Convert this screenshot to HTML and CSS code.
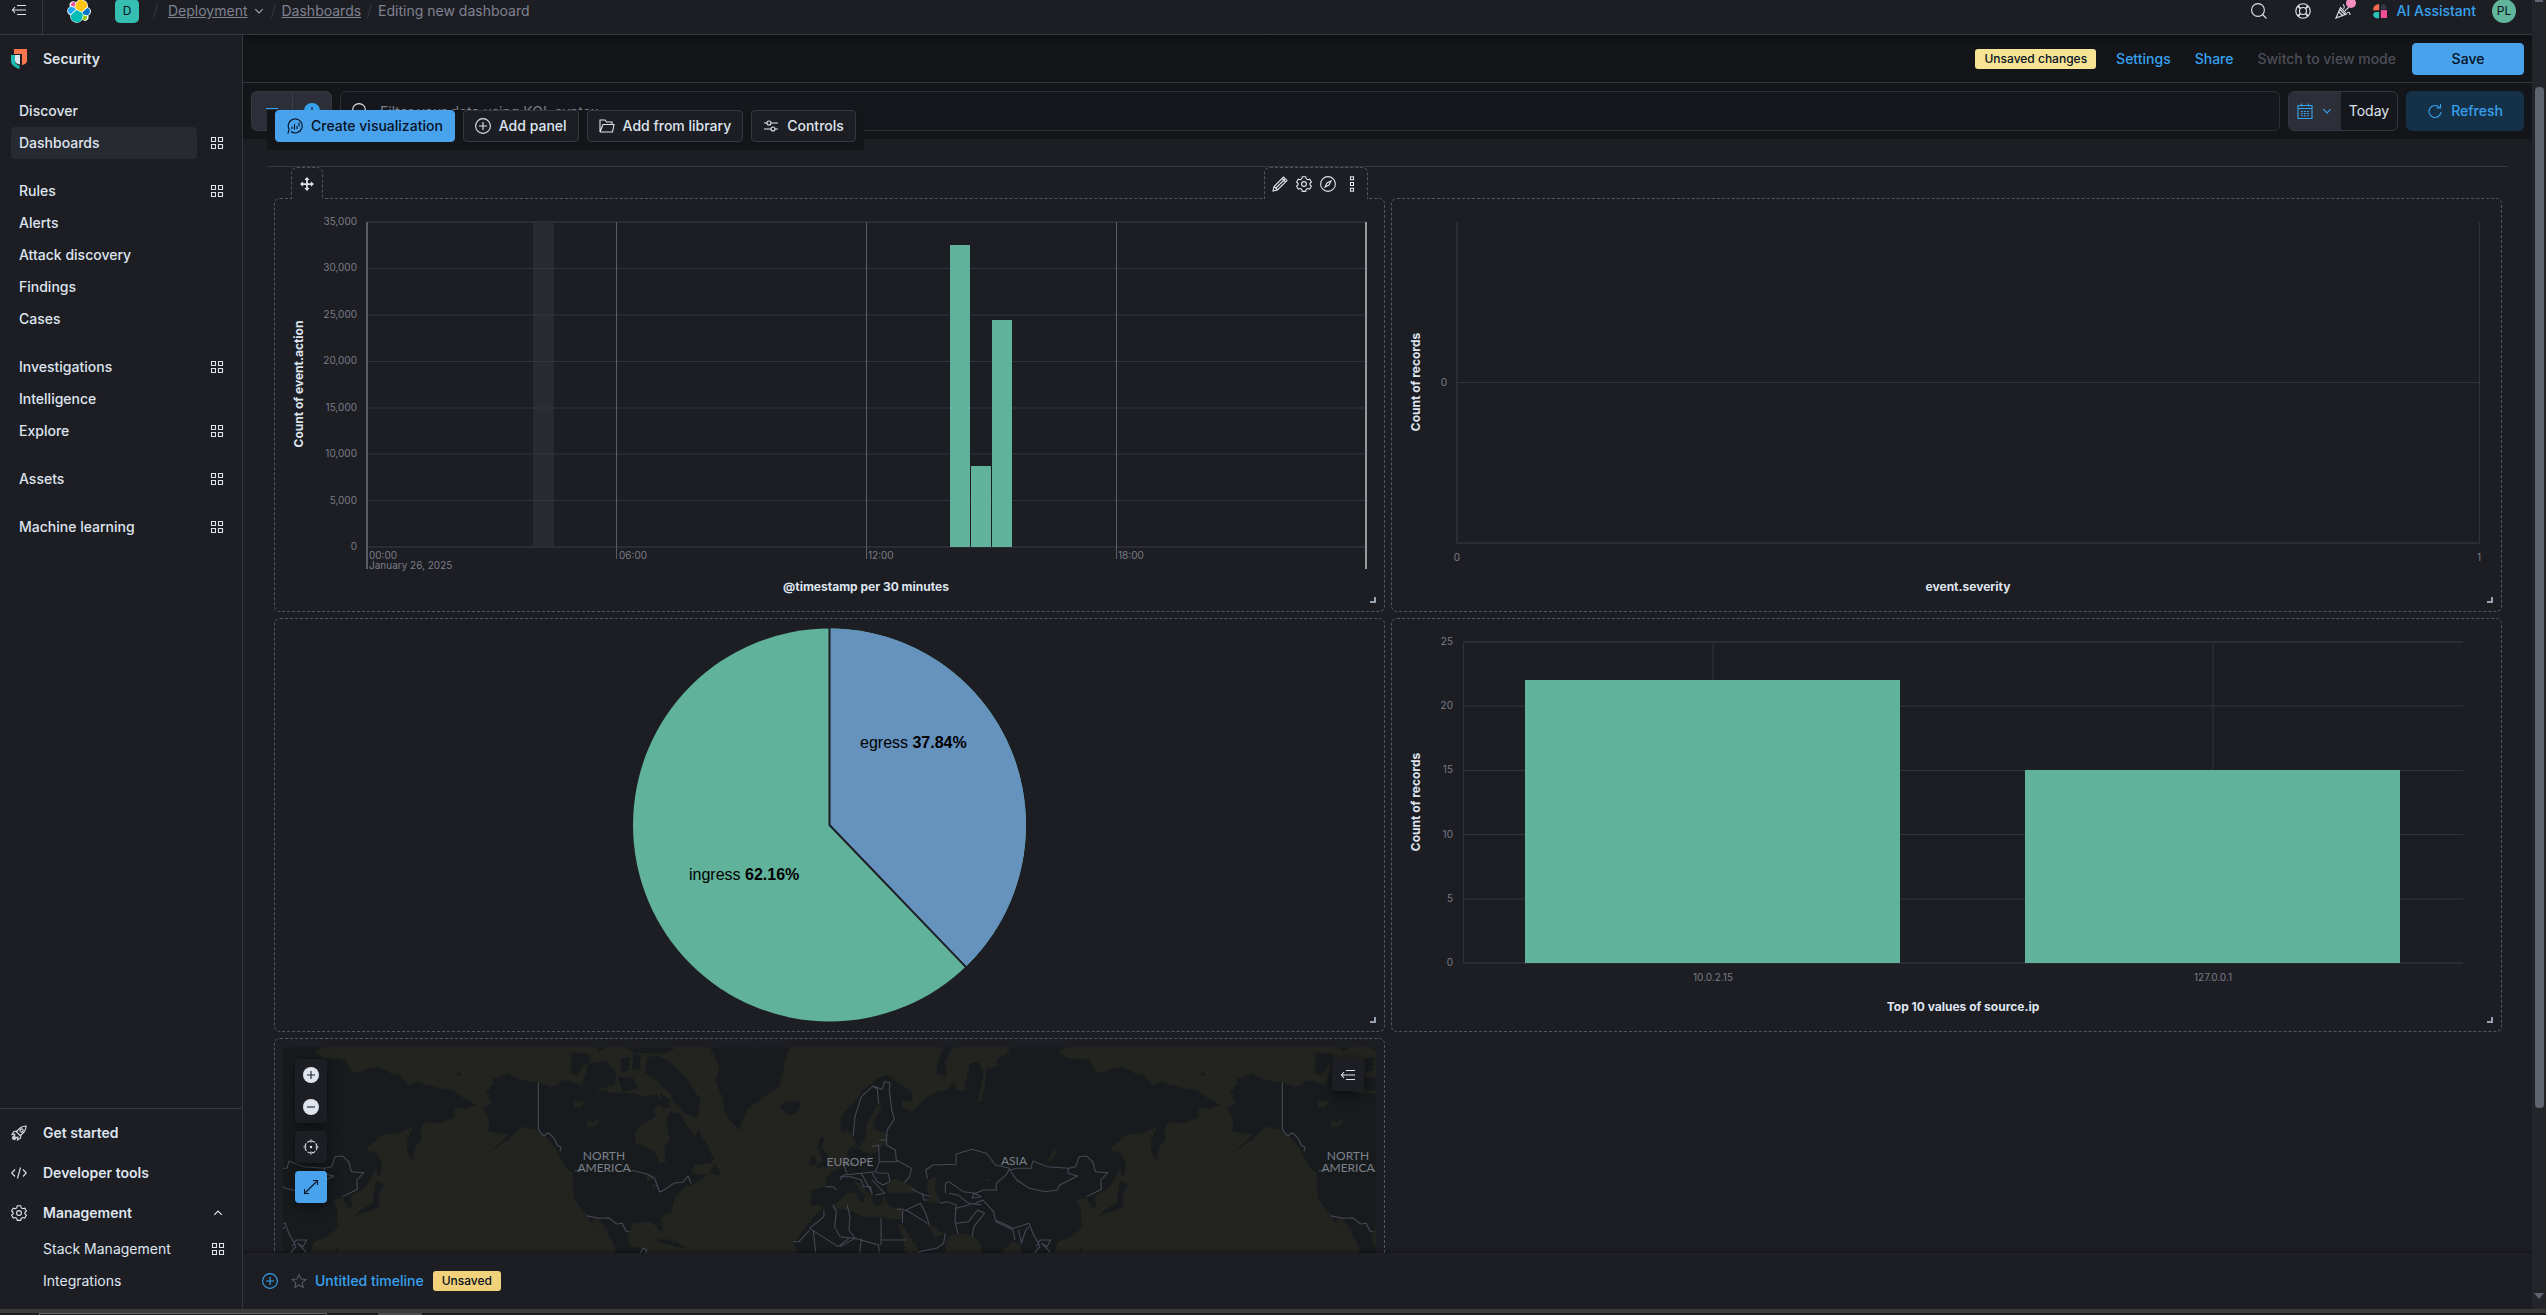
FILE: index.html
```html
<!DOCTYPE html>
<html lang="en">
<head>
<meta charset="utf-8">
<title>Editing new dashboard - Elastic</title>
<link rel="stylesheet" href="styles.css">
</head>
<body>
<svg class="defs" aria-hidden="true">
  <symbol id="i-menu" viewBox="0 0 16 16"><path d="M6 3.500h9M1.500 8H15M6 12.500h9M4 5L1.500 8 4 11"/></symbol>
  <symbol id="i-apps" viewBox="0 0 16 16"><path d="M2.500 2.500h4v4h-4zM9.500 2.500h4v4h-4zM2.500 9.500h4v4h-4zM9.500 9.500h4v4h-4z"/></symbol>
  <symbol id="i-down" viewBox="0 0 16 16"><path d="M3 5.500l5 5 5-5"/></symbol>
  <symbol id="i-up" viewBox="0 0 16 16"><path d="M3 10.500l5-5 5 5"/></symbol>
  <symbol id="i-search" viewBox="0 0 16 16"><circle cx="7" cy="7" r="6.400"/><path d="M11.500 11.500L15.500 15.500"/></symbol>
  <symbol id="i-plus" viewBox="0 0 16 16"><circle cx="8" cy="8" r="7.400"/><path d="M8 4v8M4 8h8"/></symbol>
  <symbol id="i-gear" viewBox="0 0 16 16"><circle cx="8" cy="8" r="2.400"/><path d="M6.300.8h3.400l.6 2.100 1.300.8 2.100-.6 1.700 2.900-1.500 1.500v1.200l1.500 1.500-1.700 2.900-2.100-.6-1.300.8-.6 2.100H6.300l-.6-2.100-1.300-.8-2.100.6L.6 10.200l1.500-1.500V7.500L.6 6l1.700-2.900 2.100.6 1.300-.8z"/></symbol>
</svg>

<div class="app">
  <header class="top">
    <button class="icon-btn top-menu" aria-label="Toggle navigation"><svg class="ic"><use href="#i-menu"/></svg></button>
    <a class="logo" href="#" aria-label="Elastic home"><svg viewBox="0 0 32 32"><path fill="#fff" d="M32 16.800c0-2.700-1.700-5-4.200-5.900a9 9 0 00-16.200-6.400A4.800 4.800 0 003.900 10 6.300 6.300 0 00.2 15.500c0 2.700 1.700 5.100 4.200 6a9 9 0 0016.200 6.300 4.800 4.800 0 007.700-5.400A6.300 6.300 0 0032 16.800"/><path fill="#FEC514" d="M12.600 13.800l7 3.200 7.100-6.200A7.900 7.900 0 0012.200 5.200L11 11.300z"/><path fill="#02BCB7" d="M5.400 21.300a7.900 7.900 0 0014.600 5.600l1.200-6-1.600-3-7-3.200z"/><path fill="#F04E98" d="M5.400 9.100l4.800 1.100 1-5.400a3.800 3.800 0 00-5.800 4.300"/><path fill="#1BA9F5" d="M5 10.200a5.300 5.300 0 00-.2 10l6.700-6.100-1.200-2.600z"/><path fill="#93C90E" d="M20.900 27.200a3.800 3.800 0 005.900-4.300L22 21.800z"/><path fill="#07C" d="M21.900 20.500l5.300 1.200a5.300 5.300 0 00.2-9.900l-6.900 6z"/></svg></a>
    <span class="space">D</span>
    <nav class="crumbs" aria-label="Breadcrumbs">
      <i class="slash"></i><a href="#">Deployment</a><svg class="ic ic-12"><use href="#i-down"/></svg>
      <i class="slash"></i><a href="#">Dashboards</a>
      <i class="slash"></i><span>Editing new dashboard</span>
    </nav>
    <div class="top-right">
      <button class="icon-btn" aria-label="Search"><svg class="ic"><use href="#i-search"/></svg></button>
      <button class="icon-btn" aria-label="Help"><svg class="ic" viewBox="0 0 16 16"><circle cx="8" cy="8" r="7.200"/><circle cx="8" cy="8" r="3.500"/><path d="M2.500 3.500l3 2M3.500 2.500l2 3M13.500 3.500l-3 2M12.500 2.500l-2 3M2.500 12.500l3-2M3.500 13.500l2-3M13.500 12.500l-3-2M12.500 13.500l-2-3"/></svg></button>
      <button class="icon-btn news" aria-label="News"><svg class="ic" viewBox="0 0 16 16"><path d="M1 15L5.500 4.500 11.500 11zM4 9l4 4M5 6.500l5 5M8 1.500c1.500 1 1.500 3 .5 4.500M10 8c1-2 3-2 3.500-4M12 9.500c2-.8 3 .5 3 2.500"/></svg><i class="dot"></i></button>
      <a class="assistant" href="#"><svg viewBox="0 0 16 16"><path fill="#F86B4F" d="M7 0v7H0a7 7 0 017-7"/><circle cx="12" cy="3.500" r="3.300" fill="#343741"/><path fill="#2CBFB3" d="M7 9v7a5 5 0 01-7-4 4 4 0 014-3z"/><path fill="#F04E98" d="M9 7h7v9H9z"/></svg>AI Assistant</a>
      <span class="avatar">PL</span>
    </div>
  </header>

  <aside class="side">
    <div class="solution"><svg viewBox="0 0 16 20"><path fill="#FA744E" d="M3 0h13v12c0 2-2 3.500-5 4V5H3z"/><path fill="#1DBAB0" d="M0 6h4v6.500c0 2 2 3.500 4.500 4V20C3 18 0 15.500 0 12z"/><path fill="#dfe5ef" d="M4 6h5v9.500C6 15 4 13.500 4 12z"/></svg>Security</div>
    <nav class="menu" aria-label="Security">
      <div class="group">
        <div class="row"><a href="#">Discover</a></div>
        <div class="row"><a class="active" href="#">Dashboards</a><svg class="ic"><use href="#i-apps"/></svg></div>
      </div>
      <div class="group">
        <div class="row"><a href="#">Rules</a><svg class="ic"><use href="#i-apps"/></svg></div>
        <div class="row"><a href="#">Alerts</a></div>
        <div class="row"><a href="#">Attack discovery</a></div>
        <div class="row"><a href="#">Findings</a></div>
        <div class="row"><a href="#">Cases</a></div>
      </div>
      <div class="group">
        <div class="row"><a href="#">Investigations</a><svg class="ic"><use href="#i-apps"/></svg></div>
        <div class="row"><a href="#">Intelligence</a></div>
        <div class="row"><a href="#">Explore</a><svg class="ic"><use href="#i-apps"/></svg></div>
      </div>
      <div class="group"><div class="row"><a href="#">Assets</a><svg class="ic"><use href="#i-apps"/></svg></div></div>
      <div class="group"><div class="row"><a href="#">Machine learning</a><svg class="ic"><use href="#i-apps"/></svg></div></div>
    </nav>
    <nav class="side-foot" aria-label="Management">
      <a class="main-link" href="#"><svg class="ic" viewBox="0 0 16 16"><path d="M15 1c-4 0-7 2-9.500 6l3.500 3.500C13 8 15 5 15 1zM6 6L3 6.500 1 9.500l3.500-.5M10 10l-.5 3-3 2 .5-3.500M4 10l-3 3M6 12l-3 3M4.500 11.500L1.500 14.500"/><circle cx="10.500" cy="5.500" r="1.600"/></svg>Get started</a>
      <a class="main-link" href="#"><svg class="ic" viewBox="0 0 16 16"><path d="M4 4.500L.7 8 4 11.500M12 4.500L15.300 8 12 11.500M9.500 2.500l-3 11"/></svg>Developer tools</a>
      <a class="main-link" href="#"><svg class="ic"><use href="#i-gear"/></svg>Management<svg class="ic ic-12 end"><use href="#i-up"/></svg></a>
      <a class="sub-link" href="#">Stack Management<svg class="ic end"><use href="#i-apps"/></svg></a>
      <a class="sub-link" href="#">Integrations</a>
    </nav>
  </aside>

  <main class="main">
    <div class="actions">
      <span class="badge">Unsaved changes</span>
      <button class="text-btn">Settings</button>
      <button class="text-btn">Share</button>
      <button class="text-btn" disabled>Switch to view mode</button>
      <button class="btn primary save">Save</button>
    </div>
    <div class="query">
      <div class="filters">
        <button aria-label="Saved queries"><svg class="ic" viewBox="0 0 16 16"><path d="M2 5.500h12M4.500 9h7M6.500 12.500h3"/></svg></button>
        <button aria-label="Add filter"><svg class="ic solid" viewBox="0 0 16 16"><circle cx="8" cy="8" r="8"/><path d="M8 4v8M4 8h8"/></svg></button>
      </div>
      <label class="kql"><svg class="ic"><use href="#i-search"/></svg><input type="text" aria-label="Query" placeholder="Filter your data using KQL syntax"></label>
      <div class="dates">
        <button class="cal" aria-label="Date quick select"><svg class="ic" viewBox="0 0 16 16"><path d="M1 2.500h14v13H1zM1 5.500h14M4.500.5v3M11.500.5v3M4 8.500h2M7 8.500h2M10 8.500h2M4 10.500h2M7 10.500h2M10 10.500h2M4 12.800h2M7 12.800h2M10 12.800h2"/></svg><svg class="ic ic-12"><use href="#i-down"/></svg></button>
        <button class="today">Today</button>
      </div>
      <button class="refresh"><svg class="ic" viewBox="0 0 16 16"><path d="M12.500 4.500A6 6 0 1014 9M13.500 1v4h-4"/></svg>Refresh</button>
    </div>

    <div class="dash">
      <div class="tools">
        <button class="btn primary"><svg class="ic" viewBox="0 0 16 16"><path d="M4 13.500a7 7 0 10-1.800-2L.8 15.500M5 8.500v2.500M7.500 6v5.500M10 8v3M12 4.500v4"/></svg>Create visualization</button>
        <button class="btn"><svg class="ic"><use href="#i-plus"/></svg>Add panel</button>
        <button class="btn"><svg class="ic" viewBox="0 0 16 16"><path d="M1 14V2h5l1.500 2H13v2.500M1 14h12.500L15 6.500H4L1 14"/></svg>Add from library</button>
        <button class="btn"><svg class="ic" viewBox="0 0 16 16"><path d="M1 5h3M8 5h7M1 11h7M12 11h3"/><circle cx="6" cy="5" r="2"/><circle cx="10" cy="11" r="2"/></svg>Controls</button>
      </div>
      <hr>
      <div class="grid">
        <section class="panel">
          <button class="tab drag" aria-label="Move panel"><svg class="ic bold" viewBox="0 0 16 16"><path d="M8 2v12M2 8h12"/><path class="fill" d="M8 0l3 3.500H5zM8 16l3-3.500H5zM0 8l3.500-3v6zM16 8l-3.500-3v6z"/></svg></button>
          <div class="tab hover">
            <button class="icon-btn" aria-label="Edit"><svg class="ic" viewBox="0 0 16 16"><path d="M1 15l1-4.500L11.500 1 15 4.500 5.500 14zM2 10.500L5.500 14M4 12l9-9M10 2.500L13.500 6"/></svg></button>
            <button class="icon-btn" aria-label="Panel settings"><svg class="ic"><use href="#i-gear"/></svg></button>
            <button class="icon-btn" aria-label="Explore"><svg class="ic" viewBox="0 0 16 16"><circle cx="8" cy="8" r="7.400"/><path d="M11 5L9 9 5 11l2-4z"/></svg></button>
            <button class="icon-btn" aria-label="More"><svg class="ic" viewBox="0 0 16 16"><path d="M6.500.8h3v3h-3zM6.500 6.500h3v3h-3zM6.500 12.200h3v3h-3z"/></svg></button>
          </div>
          <svg class="chart" viewBox="275 199 1109 412" role="img" aria-label="Count of event.action over time">
            <rect class="hl" x="533" y="222" width="21" height="325"/>
            <path class="grid-l" d="M367 268.500h999M367 315h999M367 361.500h999M367 408h999M367 454h999M367 500.500h999"/>
            <path class="grid-b" d="M367 222h999M367 547h999"/>
            <path class="time-l" d="M616.500 222v337M866.500 222v337M1116.500 222v337"/>
            <path class="time-b" d="M367 222v347"/><path class="time-e" d="M1366 222v347"/>
            <path class="green" d="M950 245h20v302h-20zM971 466h20v81h-20zM992 320h20v227h-20z"/>
            <g class="lab r"><text x="357" y="225">35,000</text><text x="357" y="271">30,000</text><text x="357" y="318">25,000</text><text x="357" y="364">20,000</text><text x="357" y="411">15,000</text><text x="357" y="457">10,000</text><text x="357" y="504">5,000</text><text x="357" y="550">0</text></g>
            <g class="lab"><text x="369" y="559">00:00</text><text x="369" y="569">January 26, 2025</text><text x="619" y="559">06:00</text><text x="868" y="559">12:00</text><text x="1118" y="559">18:00</text></g>
            <text class="title" x="866" y="591">@timestamp per 30 minutes</text>
            <text class="title" transform="translate(303 384) rotate(-90)">Count of event.action</text>
          </svg>
          <i class="grip"></i>
        </section>

        <section class="panel">
          <svg class="chart" viewBox="1392 199 1109 412" role="img" aria-label="Count of records by event.severity">
            <path class="grid-b" d="M1457 222v321M1457 543h1023"/><path class="grid-l" d="M1457 382.500h1022M2479.500 222v321"/>
            <g class="lab r"><text x="1447" y="386">0</text></g>
            <g class="lab c"><text x="1457" y="561">0</text><text x="2479" y="561">1</text></g>
            <text class="title" x="1968" y="591">event.severity</text>
            <text class="title" transform="translate(1420 382) rotate(-90)">Count of records</text>
          </svg>
          <i class="grip"></i>
        </section>

        <section class="panel">
          <svg class="chart" viewBox="275 619 1109 412" role="img" aria-label="Ingress and egress share">
            <circle class="green" cx="829.500" cy="825" r="196.500"/>
            <path class="slice" d="M829.500 825V628.500A196.500 196.500 0 01965.600 966.700Z"/>
            <path class="cut" d="M829.500 628V825L966 967.100"/>
            <text class="pie" x="860" y="748">egress <tspan>37.84%</tspan></text>
            <text class="pie" x="689" y="880">ingress <tspan>62.16%</tspan></text>
          </svg>
          <i class="grip"></i>
        </section>

        <section class="panel">
          <svg class="chart" viewBox="1392 619 1109 412" role="img" aria-label="Top 10 values of source.ip">
            <path class="grid-l" d="M1463 706h1000M1463 770.500h1000M1463 834.500h1000M1463 899h1000M1463.500 642v321M1713 642v321M2213 642v321"/>
            <path class="grid-b" d="M1463 642h1000M1463 963h1000"/>
            <path class="green" d="M1525 680h375v283h-375zM2025 770h375v193h-375z"/>
            <g class="lab r"><text x="1453" y="645">25</text><text x="1453" y="709">20</text><text x="1453" y="773">15</text><text x="1453" y="838">10</text><text x="1453" y="902">5</text><text x="1453" y="966">0</text></g>
            <g class="lab c"><text x="1713" y="981">10.0.2.15</text><text x="2213" y="981">127.0.0.1</text></g>
            <text class="title" x="1963" y="1011">Top 10 values of source.ip</text>
            <text class="title" transform="translate(1420 802) rotate(-90)">Count of records</text>
          </svg>
          <i class="grip"></i>
        </section>

        <section class="panel map">
          <svg class="world" viewBox="283 1047 1093 396" preserveAspectRatio="xMinYMin slice" role="img" aria-label="World map">
            <defs>
              <filter id="coast" x="-5%" y="-5%" width="110%" height="110%" color-interpolation-filters="sRGB"><feTurbulence type="fractalNoise" baseFrequency=".14" numOctaves="3" seed="4"/><feDisplacementMap in="SourceGraphic" scale="9" xChannelSelector="R" yChannelSelector="G"/></filter>
              <g id="america" transform="translate(270 1030) scale(.3827 .3333)">
                <g filter="url(#coast)">
                <path class="land" d="M580 150L620 132 660 150 700 158 740 172 770 150 810 165 860 180 900 190 950 190 980 200 1010 190 1020 220 1000 240 1010 260 975 280 952 310 955 340 990 355 1010 370 1018 400 1035 395 1030 350 1045 330 1035 280 1045 245 1075 255 1085 280 1110 320 1120 300 1140 340 1160 385 1150 400 1110 405 1100 430 1145 435 1110 460 1085 470 1060 500 1050 540 1020 565 1028 605 1015 600 1000 575 950 580 935 610 940 650 970 655 985 670 1000 900 950 900 900 650 880 600 860 565 840 560 850 600 868 625 850 600 830 555 795 510 790 430 770 410 755 370 730 330 700 300 660 290 640 310 620 330 575 365 600 340 625 315 570 305 575 270 555 235 580 220 565 185 585 160Z"/>
                <path class="land" d="M790 68L830 70 840 90 815 110 805 135 785 130ZM830 100L880 95 905 130 900 165 850 180 815 165 825 130ZM915 85L940 80 940 120 920 125ZM950 70L970 75 965 120 945 115ZM985 85L1010 75 1050 100 1085 140 1125 210 1115 265 1085 250 1060 225 1045 190 1010 150 980 130ZM910 140L950 145 960 175 920 185ZM1020 190L1045 210 1040 235 1020 230ZM1150 50L1175 110 1165 150 1180 200 1190 250 1225 302 1245 240 1290 200 1330 170 1345 100 1355 50ZM1330 228L1350 215 1385 215 1385 240 1355 255ZM850 50L880 50 860 65ZM930 55L1000 50 1060 55 1030 70 950 68ZM1145 430L1165 400 1178 435ZM1000 630L1040 628 1095 655 1060 650Z"/>
                <path class="sea" d="M790 215L825 210 815 230 795 232ZM830 275L870 265 850 290 825 290ZM985 430L1010 440 1000 450 985 455ZM1000 460L1010 465 1000 482Z"/>
                </g>
                <path class="edge" d="M701 158V298L715 318 728 308 745 330 750 345 760 352 758 364M797 422H815M935 422H950L985 432 1005 445 1018 486 1030 480 1055 460 1080 456 1092 438 1100 460M828 557L860 565 885 563 905 582 920 580 930 603 938 605M968 668L975 655 985 660 980 670"/>
              </g>
              <g id="eurasia" transform="translate(840 1030) scale(.3571 .3333)">
                <g filter="url(#coast)">
                <path class="land" d="M1 310L1 265 20 240 40 215 65 180 90 160 110 140 135 135 150 150 180 170 205 190 200 215 170 210 178 235 200 245 215 230 240 205 270 185 300 180 320 160 330 185 350 180 358 130 365 100 390 95 395 120 440 110 440 85 470 70 475 45 640 45 610 68 640 85 700 90 718 130 750 120 790 110 825 130 850 135 875 165 900 155 960 175 1000 180 1030 205 1065 225 1040 235 1005 235 1000 265 960 280 920 275 905 310 912 330 895 345 885 395 870 360 875 320 890 288 850 310 800 315 755 360 790 370 785 420 760 460 745 480 712 500 718 535 705 530 690 500 665 510 675 545 678 590 650 620 610 635 600 668 600 900 530 900 505 640 480 635 450 668 440 900 400 900 395 640 370 615 330 610 300 620 270 900 -60 900 -128 640 -96 590 -74 560 -42 535 -60 525 -83 525 -80 480 -42 470 -37 440 -10 420 22 400 22 360 32 350 45 350 40 325 20 300Z"/>
                <path class="land" d="M320 50L295 90 300 140 270 130 275 90 290 50ZM-55 320L-45 325 -50 350 -31 385 -37 410 -68 415 -50 390 -62 350ZM-85 390L-70 375 -66 400 -85 410ZM785 368L800 400 798 432 788 440 787 400ZM785 450L808 465 790 490 795 530 760 545 725 560 735 545 775 520 780 480ZM1003 130L1025 127 1018 140ZM670 650L680 655 675 670Z"/>
                <path class="sea" d="M45 350L90 375 130 340 130 308 98 300 92 275 118 228 105 225 75 280 72 320 55 350ZM-25 535L10 500 20 490 45 490 60 520 70 500 50 470 40 455 55 460 90 500 100 530 120 520 120 495 140 530 175 535 178 565 150 570 110 560 60 560 20 540ZM130 470L150 445 190 460 225 490 180 488 135 490ZM245 450L270 440 265 480 285 520 255 520 245 480ZM160 580L175 585 225 668 240 900 225 900 175 620ZM240 580L262 585 280 605 300 610 265 620ZM580 395L600 355 608 365 590 395ZM395 450L425 445 415 455ZM385 215L398 150 405 100 410 150 395 215Z"/>
                </g>
                <path class="edge" d="M37 318L42 260 60 200 92 168 105 178 108 222M92 168L118 178 125 155 140 158 138 180 145 240 152 268 132 300 130 345 155 360 158 395 110 395 108 345 90 350M110 330L130 330M158 390L200 415 195 440 180 458M110 395L100 425 60 430 10 435 0 450M60 430L70 450 90 490M100 428L135 430 140 455 120 465 105 455 90 430M0 440L30 440 60 450 65 470 85 470 90 495M20 430L10 405 40 400M90 450L125 490 100 495M245 445L240 420 260 405 325 403V372L370 358 410 370 435 405 475 415 465 435 437 460 438 480 400 480 380 490 345 485 305 455 295 460V490M475 420L495 415 535 415 540 393 580 410 640 415 638 430 665 438 615 465 608 480 575 485 530 475 495 450 475 420M640 415L660 410 670 380 690 378 708 395 715 425 750 428 730 450 732 478 690 500M280 520L300 515 325 525 322 575 330 610M325 535L380 520 400 510 430 545 435 570 485 595 530 580 540 610 560 650 545 668M325 580L360 575 385 540 405 550 375 590 370 620M435 575L485 600 490 630M500 600L508 640 520 600 530 590M375 490L395 500 370 505ZM305 490L330 495 360 520 395 525M200 475L225 490 250 500M230 490L235 510 250 510M175 580L175 545 225 520 240 550 250 585M185 540L215 560 245 580M20 525L28 560 25 600 42 625 0 650M42 625L108 645 110 668M115 565V630H185M115 600V645M60 625L55 668M220 665L270 655 290 640 295 610M240 660L220 668M550 650L560 630 590 630 580 650 565 640 590 668M160 538H180M-20 525L-10 545 -15 590 0 620 40 625M-45 540L-45 560 -85 595 -5 650 25 625M-75 600L-68 668M-85 600L-115 635H-130M-40 470H-20L-10 480"/>
              </g>
            </defs>
            <rect class="sea" x="276" y="1040" width="1110" height="410"/>
            <g class="earth">
              <use href="#eurasia" x="-744"/><use href="#eurasia"/><use href="#america"/><use href="#america" x="744"/>
            </g>
            <g class="place"><text x="604" y="1160">NORTH</text><text x="604" y="1172">AMERICA</text><text x="850" y="1166">EUROPE</text><text x="1014" y="1165">ASIA</text><text x="1348" y="1160">NORTH</text><text x="1348" y="1172">AMERICA</text></g>
          </svg>
          <div class="map-tools">
            <div class="stack">
              <button aria-label="Zoom in"><svg class="ic disc" viewBox="0 0 16 16"><circle cx="8" cy="8" r="8"/><path d="M8 4v8M4 8h8"/></svg></button>
              <button aria-label="Zoom out"><svg class="ic disc" viewBox="0 0 16 16"><circle cx="8" cy="8" r="8"/><path d="M4 8h8"/></svg></button>
            </div>
            <button aria-label="Fit to data"><svg class="ic" viewBox="0 0 16 16"><circle cx="8" cy="8" r="6" stroke-dasharray="3.400 1.300"/><circle cx="8" cy="8" r=".7"/><path d="M8 .5v3M8 12.500v3M.5 8h3M12.500 8h3"/></svg></button>
            <button class="blue" aria-label="Tools"><svg class="ic" viewBox="0 0 16 16"><path d="M2.500 13.500l11-11M10 1.500h4.500V6M1.500 10v4.500H6"/></svg></button>
          </div>
          <button class="legend" aria-label="Expand legend"><svg class="ic"><use href="#i-menu"/></svg></button>
        </section>
      </div>
    </div>

    <div class="timeline">
      <button class="icon-btn add" aria-label="New timeline"><svg class="ic"><use href="#i-plus"/></svg></button>
      <button class="icon-btn star" aria-label="Favorite"><svg class="ic" viewBox="0 0 16 16"><path d="M8 1.500l2 4.500 4.800.5-3.600 3.200 1 4.800L8 12l-4.200 2.500 1-4.800L1.200 6.500 6 6z"/></svg></button>
      <a href="#">Untitled timeline</a>
      <span class="badge warn">Unsaved</span>
    </div>
  </main>

  <div class="scroll" aria-hidden="true"><i class="arrow"></i><i class="thumb"></i><svg class="arrow-down" viewBox="0 0 10 6"><path d="M0 0h10L5 6z"/></svg></div>
  <footer class="dock" aria-hidden="true"><i class="task"></i><i class="chip"></i></footer>
</div>
</body>
</html>
```
FILE: styles.css
```css
* { box-sizing: border-box; }
body {
  margin: 0;
  background: #1d1e24;
  color: #dfe5ef;
  font: 400 14px/20px Inter, "Liberation Sans", sans-serif;
}
a { color: inherit; text-decoration: none; }
button, input { font: inherit; color: inherit; background: none; border: 0; padding: 0; margin: 0; }
button { display: inline-flex; align-items: center; justify-content: center; }
.defs { position: absolute; width: 0; height: 0; }
.ic { width: 16px; height: 16px; flex: none; fill: none; stroke: currentColor; stroke-width: 1.1; }
.ic-12 { width: 12px; height: 12px; stroke-width: 1.6; }
.bold { width: 14px; height: 14px; stroke-width: 2; }
.bold .fill { fill: currentColor; stroke: none; }
.icon-btn { width: 24px; height: 24px; flex: none; }

.app {
  display: grid;
  grid-template: 35px minmax(0, 1fr) 6px / 243px minmax(0, 1fr) 14px;
  height: 100vh;
  overflow: hidden;
}

/* header */
.top {
  grid-column: 1 / 3;
  display: flex;
  align-items: center;
  padding: 0 16px 12px 0;
  border-bottom: 1px solid #343741;
  z-index: 3;
}
.top-menu { width: 43px; height: 48px; padding-right: 4px; border-right: 1px solid #343741; margin: -14px 24px -12px 0; }
.logo { width: 24px; height: 24px; }
.logo svg { display: block; width: 24px; height: 24px; }
.space { width: 24px; height: 24px; margin: 0 16px 0 24px; border-radius: 5px; background: #35bfb3; color: #07101f; text-align: center; font-size: 12px; line-height: 24px; }
.crumbs { display: flex; align-items: center; gap: 8px; color: #7f828f; }
.crumbs a { text-decoration: underline; }
.crumbs .ic { color: #98a2b3; margin-left: -3px; }
.slash { width: 1px; height: 16px; background: #343741; transform: rotate(15deg); }
.slash:first-child { margin-right: 4px; }
.top-right { margin-left: auto; display: flex; align-items: center; gap: 20px; }
.top-right .news { position: relative; margin: 0 -2px 0 -4px; }
.dot { position: absolute; right: -1px; top: -1px; width: 10px; height: 10px; border-radius: 50%; background: #f68fbe; }
.assistant { display: flex; align-items: center; gap: 10px; color: #36a2ef; font-weight: 500; margin-right: -4px; }
.assistant svg { width: 14px; height: 16px; }
.avatar { width: 24px; height: 24px; border-radius: 50%; background: #61b59b; color: #07101f; text-align: center; font-size: 12px; line-height: 24px; }

/* side navigation */
.side {
  grid-area: 2 / 1;
  display: flex;
  flex-direction: column;
  min-height: 0;
  border-right: 1px solid #343741;
}
.solution { display: flex; align-items: center; gap: 16px; height: 48px; padding-left: 11px; font-weight: 600; }
.solution svg { width: 16px; height: 20px; }
.menu { flex: 1; display: flex; flex-direction: column; gap: 16px; padding: 12px 17px 0 11px; min-height: 0; }
.row { display: flex; align-items: center; height: 32px; font-weight: 450; }
.row a { width: 186px; height: 32px; padding: 6px 8px; border-radius: 4px; margin-right: 12px; }
.row a.active { background: #282a31; }
.side-foot { display: flex; flex-direction: column; border-top: 1px solid #343741; padding: 4px 16px 12px 11px; }
.side-foot a { display: flex; align-items: center; }
.main-link { height: 40px; gap: 16px; font-weight: 600; }
.sub-link { height: 32px; padding-left: 32px; }
.end { margin-left: auto; }
.main-link .end { margin-right: 2px; }

/* main column */
.main { grid-area: 2 / 2; position: relative; min-width: 0; min-height: 0; overflow: hidden; }
.actions {
  display: flex;
  align-items: center;
  justify-content: flex-end;
  height: 48px;
  padding: 0 8px;
  background: linear-gradient(#0e0f12, #141519 10px);
  border-bottom: 1px solid #343741;
}
.badge { padding: 0 9px; border-radius: 3px; background: #f6e394; color: #07101f; font-size: 12px; line-height: 20px; font-weight: 500; }
.text-btn { color: #36a2ef; font-weight: 500; margin-left: 24px; }
.badge + .text-btn { margin-left: 20px; }
.text-btn:disabled { color: #4c4f58; }
.btn { height: 32px; gap: 8px; padding: 0 11px; border: 1px solid #343741; border-radius: 4px; font-weight: 450; background: #1d1e24; }
.btn.primary { background: #48a3ec; border-color: #48a3ec; color: #07101f; }
.save { width: 112px; margin-left: 16px; }
.query { display: flex; gap: 8px; padding: 8px; background: #141519; }
.filters { display: flex; border: 1px solid #343741; border-radius: 6px; background: #2c2f38; color: #36a2ef; overflow: hidden; }
.filters button { width: 40px; height: 38px; }
.filters button + button { border-left: 1px solid #3c404b; width: 39px; }
.solid circle { fill: #36a2ef; stroke: none; }
.solid path { stroke: #141519; }
.kql { flex: 1; display: flex; align-items: center; gap: 12px; height: 40px; padding: 0 11px; border: 1px solid #2c2f38; border-radius: 6px; background: #16171c; }
.kql input { flex: 1; height: 38px; outline: 0; }
.kql input::placeholder { color: #7a7f89; opacity: 1; }
.dates { display: flex; border: 1px solid #343741; border-radius: 6px; background: #16171c; overflow: hidden; }
.cal { width: 52px; gap: 8px; background: #2c2f38; color: #36a2ef; }
.today { width: 56px; }
.refresh { width: 118px; gap: 8px; border-radius: 6px; background: #143148; color: #36a2ef; font-weight: 500; }

/* dashboard */
.dash { padding: 0 24px; }
.tools { position: relative; width: fit-content; display: flex; gap: 8px; margin-top: -29px; padding: 0 8px 8px; background: #141519; }
.dash hr { height: 1px; margin: 16px 0 0; border: 0; background: #343741; }
.grid { display: grid; grid-template-columns: 1fr 1fr; gap: 6px; padding: 31px 6px 0 7px; }
.panel { position: relative; height: 414px; border: 1px dashed #53565f; border-radius: 6px; }
.tab { position: absolute; top: -32px; height: 32px; background: #1d1e24; border: 1px dashed #53565f; border-bottom: 0; border-radius: 6px 6px 0 0; }
.drag { left: 16px; width: 32px; }
.hover { right: 16px; display: flex; align-items: center; padding: 0 3px; }
.grip { position: absolute; right: 8px; bottom: 8px; width: 6px; height: 6px; border: solid #98a2b3; border-width: 0 2px 2px 0; }

/* charts */
.chart { display: block; width: 100%; height: 100%; }
.hl { fill: #2a2a33; }
.grid-l, .grid-b { fill: none; stroke: #32333c; }
.grid-b { stroke: #2b2c34; stroke-width: 2; }
.time-l { stroke: #5d5e64; }
.time-b { stroke: #5d5e64; stroke-width: 2; }
.time-e { stroke: #97989b; stroke-width: 2; }
.green { fill: #60b29a; }
.slice { fill: #6692be; }
.cut { fill: none; stroke: #1d1e24; stroke-width: 2; }
.lab { font-size: 10px; fill: #7a7c86; }
.r { text-anchor: end; }
.c { text-anchor: middle; }
.title { font-size: 12px; font-weight: 700; fill: #dfe5ef; text-anchor: middle; }
.pie { font: 16px "Liberation Sans", Arial, sans-serif; fill: #000; }
.pie tspan { font-weight: 700; }

/* map */
.map { padding: 8px; }
.world { display: block; width: 100%; height: 396px; }
.sea { fill: #232320; }
.land { fill: #171b1d; }
.edge { fill: none; stroke: #454a55; stroke-width: 3; stroke-linejoin: round; }
.place { font: 12px Lato, sans-serif; fill: #7d818b; text-anchor: middle; }
.map-tools { position: absolute; left: 20px; top: 20px; display: flex; flex-direction: column; gap: 8px; }
.map-tools button, .legend { width: 32px; height: 32px; border-radius: 4px; background: #1d1e24; box-shadow: 0 2px 12px rgba(0, 0, 0, .5); }
.stack { display: flex; flex-direction: column; border-radius: 4px; background: #1d1e24; box-shadow: 0 2px 12px rgba(0, 0, 0, .5); }
.map-tools .stack button { box-shadow: none; }
.disc circle { fill: #dfe5ef; stroke: none; }
.disc path { stroke: #1d1e24; }
.map-tools .blue { background: #48a3ec; color: #07101f; }
.legend { position: absolute; right: 20px; top: 20px; }

/* timeline bar */
.timeline {
  position: absolute;
  left: 0;
  right: 0;
  bottom: 0;
  display: flex;
  align-items: center;
  height: 56px;
  padding-left: 15px;
  background: #1d1e24;
  box-shadow: 0 -1px 4px rgba(0, 0, 0, .4);
}
.timeline a { color: #36a2ef; font-weight: 500; margin: 0 9px 0 4px; }
.timeline .star { margin-left: 5px; color: #535966; }
.timeline .add { color: #36a2ef; }
.badge.warn { background: #f1d27a; }

/* window edge */
.scroll { grid-area: 1 / 3 / 3 / 4; display: grid; grid-template-rows: 2px 85px 78% 1fr; justify-items: center; background: #24252a; }
.arrow { width: 8px; height: 2px; background: #626672; }
.thumb { grid-row: 3; width: 9px; border-radius: 4px; background: #60646f; }
.arrow-down { grid-row: 4; align-self: end; width: 10px; height: 6px; margin-bottom: 10px; fill: #60646f; }
.dock { grid-area: 3 / 1 / 4 / 4; display: flex; gap: 51px; padding-left: 39px; background: #1b1c1d; border-top: 4px solid #3b3b3b; }
.task { width: 288px; background: #1b1c1d; border: solid #666; border-width: 1px 1px 0; }
.chip { width: 44px; background: #4a4a4a; }
```
